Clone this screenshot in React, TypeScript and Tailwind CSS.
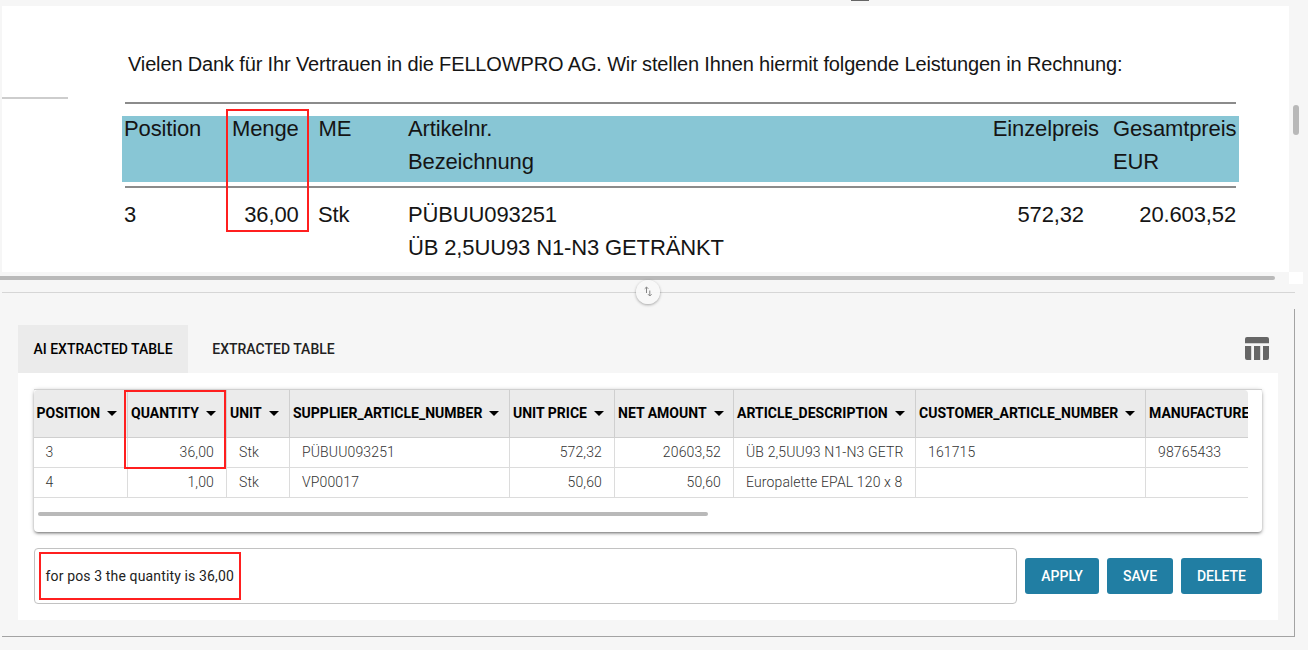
import type { ReactNode } from "react";

type Column = { label: string; width: string; align?: "right" };

const columns: Column[] = [
  { label: "POSITION", width: "w-[94px]" },
  { label: "QUANTITY", width: "w-[99px]", align: "right" },
  { label: "UNIT", width: "w-[63px]" },
  { label: "SUPPLIER_ARTICLE_NUMBER", width: "w-[220px]" },
  { label: "UNIT PRICE", width: "w-[105px]", align: "right" },
  { label: "NET AMOUNT", width: "w-[119px]", align: "right" },
  { label: "ARTICLE_DESCRIPTION", width: "w-[182px]" },
  { label: "CUSTOMER_ARTICLE_NUMBER", width: "w-[230px]" },
  { label: "MANUFACTURER", width: "w-[180px]" },
];

const rows = [
  ["3", "36,00", "Stk", "PÜBUU093251", "572,32", "20603,52", "ÜB 2,5UU93 N1-N3 GETR", "161715", "98765433"],
  ["4", "1,00", "Stk", "VP00017", "50,60", "50,60", "Europalette EPAL 120 x 8", "", ""],
];

function Highlight({ className }: { className: string }) {
  return <div className={`pointer-events-none absolute z-10 border-2 border-[#ff1f1f] ${className}`} />;
}

function Caret() {
  return (
    <svg className="ml-[7px] shrink-0" width="10" height="5" viewBox="0 0 10 5">
      <path d="M0 0h10L5 5z" fill="#000" />
    </svg>
  );
}

function DocRow({ cells, className }: { cells: ReactNode[]; className: string }) {
  return (
    <div
      className={`grid grid-cols-[102px_72.6px_20px_89.4px_500px_191px_14px_123px] text-[22px] leading-[33px] tracking-[-0.13px] whitespace-nowrap ${className}`}
    >
      <div>{cells[0]}</div>
      <div className="text-right">{cells[1]}</div>
      <div />
      <div>{cells[2]}</div>
      <div>{cells[3]}</div>
      <div className="text-right">{cells[4]}</div>
      <div />
      <div>{cells[5]}</div>
    </div>
  );
}

function DocumentViewer() {
  return (
    <div className="flex h-[266px] pl-[2px]">
      <div className="relative w-[1287px] bg-white font-['Liberation_Sans',Arial,sans-serif] text-[#151515]">
        <div className="h-[92px] pt-[42px] pl-[126px]">
          <p className="text-[20px] leading-[32px] tracking-[-0.145px] whitespace-nowrap">
            Vielen Dank für Ihr Vertrauen in die FELLOWPRO AG. Wir stellen Ihnen hiermit folgende Leistungen in
            Rechnung:
          </p>
        </div>
        <div className="mt-[-1px] h-[2px] w-[66px] bg-[#cdcdcd]" />
        <div className="mt-[3px] ml-[123px] h-[2px] w-[1111px] bg-[#8b8b8b]" />
        <div className="mt-[12px] ml-[120px] h-[66px] w-[1117.4px] bg-[#88c6d5] pl-[2px]">
          <DocRow
            className="relative top-[-4px]"
            cells={[
              "Position",
              "Menge",
              "ME",
              <>
                Artikelnr.
                <br />
                Bezeichnung
              </>,
              "Einzelpreis",
              <>
                Gesamtpreis
                <br />
                EUR
              </>,
            ]}
          />
        </div>
        <div className="mt-[4px] ml-[123px] h-[2px] w-[1111px] bg-[#8b8b8b]" />
        <DocRow
          className="mt-[10px] ml-[122px]"
          cells={[
            "3",
            "36,00",
            <span className="ml-[-0.6px]">Stk</span>,
            <>
              PÜBUU093251
              <br />
              ÜB 2,5UU93 N1-N3 GETRÄNKT
            </>,
            <span className="mr-[15px]">572,32</span>,
            <div className="text-right">20.603,52</div>,
          ]}
        />
        <Highlight className="top-[103px] left-[224px] h-[123px] w-[83px]" />
      </div>
      <div className="flex w-[14px] justify-center pt-[99px]">
        <div className="h-[30px] w-[6px] rounded-full bg-[#b9b9b9]" />
      </div>
    </div>
  );
}

function Splitter() {
  return (
    <div className="relative mr-[13px] ml-[2px] h-[25px] pt-[8px]">
      <div className="h-px bg-[#d6d6d6]" />
      <button className="absolute top-[-4px] left-[634px] flex size-6 items-center justify-center rounded-full bg-[#f8f8f8]/90 pb-[2px] shadow-[0_1px_3px_rgba(0,0,0,0.35)]">
        <svg width="8" height="11" viewBox="0 0 8 11" fill="none" stroke="#858585" strokeWidth="1">
          <path d="M2.5 7V1.2M0.7 2.8L2.5 1L4.3 2.8" />
          <path d="M5.8 4.5v5.3M4 8.2L5.8 10L7.6 8.2" />
        </svg>
      </button>
    </div>
  );
}

function ExtractedTable() {
  return (
    <div className="relative h-[143px] rounded-[4px] bg-white shadow-[0_2px_3px_-1px_rgba(0,0,0,0.45),0_1px_4px_rgba(0,0,0,0.25)]">
      <div className="h-px bg-[#d0d0d0]" />
      <div className="w-[1214px] overflow-hidden rounded-t-[4px]">
        <div className="flex w-max">
          {columns.map((c) => (
            <div
              key={c.label}
              className={`flex h-[48px] shrink-0 items-center border-r border-b border-[#cfcfcf] bg-[#ebebeb] pl-[3px] text-[14px] font-bold whitespace-nowrap text-black first:pl-[2.6px] ${c.width}`}
            >
              <span>{c.label}</span>
              <Caret />
            </div>
          ))}
        </div>
        {rows.map((r, i) => (
          <div key={i} className="flex w-max">
            {columns.map((c, j) => (
              <div
                key={c.label}
                className={`h-[30px] shrink-0 overflow-hidden border-r border-b border-[#dcdcdc] px-[12px] text-[14px] leading-[29px] font-light tracking-[0.14px] whitespace-nowrap text-[#333] first:pl-[11.6px] ${c.width} ${c.align === "right" ? "text-right" : "text-left"}`}
              >
                {r[j]}
              </div>
            ))}
          </div>
        ))}
      </div>
      <div className="mt-[14px] ml-[4px] h-[4px] w-[670px] rounded-full bg-[#b9b9b9]" />
      <Highlight className="top-px left-[90px] h-[79px] w-[102px]" />
    </div>
  );
}

function ActionButton({ children, className }: { children: string; className: string }) {
  return (
    <button
      className={`h-[36px] rounded-[3px] bg-[#217ea3] text-center text-[14px] font-medium text-white ${className}`}
    >
      {children}
    </button>
  );
}

export default function App() {
  return (
    <div className="h-[650px] w-[1308px] overflow-hidden bg-[#f6f6f6] font-[Roboto,sans-serif]">
      <div className="h-[6px]">
        <div className="ml-[851px] h-px w-[18px] bg-[#666]" />
      </div>
      <DocumentViewer />
      <div className="flex h-[12px]">
        <div className="mt-[4px] h-[4px] w-[1275px] rounded-r-full bg-[#b9b9b9]" />
        <div className="ml-[14px] w-[14px] bg-white" />
      </div>
      <Splitter />
      <section className="ml-[2px] h-[328px] w-[1293px] border-r border-b border-[#a3a3a3] pt-[16px] pr-[16px] pl-[16px]">
        <div className="flex h-[48px] items-center text-[14px] font-medium">
          <div className="flex h-full w-[170px] items-center justify-center bg-[#ebebeb] text-black">
            AI EXTRACTED TABLE
          </div>
          <div className="flex h-full w-[171px] items-center justify-center text-[#222]">EXTRACTED TABLE</div>
          <svg className="mr-[9px] ml-auto" width="24" height="24" viewBox="0 0 24 24" fill="#666">
            <path d="M2 0h20a2 2 0 0 1 2 2v4.3H0V2a2 2 0 0 1 2-2z" />
            <path d="M0 9h6.2v14H2a2 2 0 0 1-2-2zM9 9h6.2v14H9zM18 9h6v12a2 2 0 0 1-2 2h-4z" />
          </svg>
        </div>
        <div className="h-[247px] bg-white p-[16px]">
          <ExtractedTable />
          <div className="mt-[16px] flex items-center gap-[8px]">
            <div className="relative flex h-[56px] w-[983px] items-center rounded-[4px] border border-[#c2c2c2] pl-[10.5px] text-[14px] tracking-[0.14px] text-[#222]">
              for pos 3 the quantity is 36,00
              <Highlight className="top-[3px] left-[4px] h-[48px] w-[202px]" />
            </div>
            <ActionButton className="w-[74px]">APPLY</ActionButton>
            <ActionButton className="w-[66px]">SAVE</ActionButton>
            <ActionButton className="w-[81px]">DELETE</ActionButton>
          </div>
        </div>
      </section>
    </div>
  );
}
